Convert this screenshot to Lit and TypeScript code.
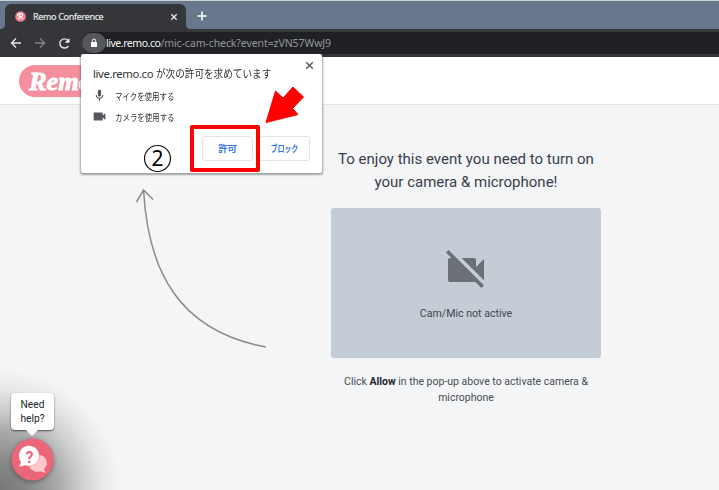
import { LitElement, html, css, svg } from "lit";
import { customElement } from "lit/decorators.js";

const camera = svg`<path d="M17 10.5V7c0-.55-.45-1-1-1H4c-.55 0-1 .45-1 1v10c0 .55.45 1 1 1h12c.55 0 1-.45 1-1v-3.500l4 4v-11z"/>`;

@customElement("browser-bar")
class BrowserBar extends LitElement {
  static styles = css`
    :host { display: block; height: 57px; background: #35363a; font-family: "Noto Sans", "Open Sans", sans-serif; }
    .strip { box-sizing: border-box; height: 29px; border-top: 1px solid #c9d0d6; background: #68778c; display: flex; padding: 3px 0 0 5px; }
    .tab { position: relative; box-sizing: border-box; width: 181px; height: 25px; background: #35363a; border-radius: 6px 6px 0 0; display: flex; align-items: center; padding: 0 8px 0 10px; color: #e6e8ea; }
    .tab::before, .tab::after { content: ""; position: absolute; bottom: 0; width: 5px; height: 5px; }
    .tab::before { left: -5px; background: radial-gradient(circle at 0 0, transparent 5px, #35363a 5.500px); }
    .tab::after { right: -5px; background: radial-gradient(circle at 100% 0, transparent 5px, #35363a 5.500px); }
    .title { font-size: 9px; line-height: 12px; margin: 1px 0 0 7px; flex: 1; white-space: nowrap; letter-spacing: -.33px; -webkit-text-stroke: .15px; }
    .plus { margin: 7px 0 0 11px; }
    svg { display: block; flex: none; }
    .tools { height: 28px; display: flex; align-items: center; padding-left: 10px; box-sizing: border-box; }
    .tools > svg { margin-right: 12px; }
    .omni { flex: 1; height: 22px; margin-left: -1px; border-radius: 11px 0 0 11px; background: #202124; display: flex; align-items: center; color: #94979b; font-size: 10.500px; white-space: nowrap; }
    .lock { width: 24px; height: 20px; border-radius: 10px; background: #55575b; display: grid; place-items: center; }
    .host { color: #f2f3f4; letter-spacing: -.46px; }
    .path { letter-spacing: -.08px; }
  `;
  render() {
    return html`
      <div class="strip">
        <div class="tab">
          <svg width="11" height="11" viewBox="0 0 11 11"><circle cx="5.500" cy="5.500" r="5.300" fill="#f27f8e"/><path d="M3.600 8.600 5 3.200M2.600 4.900C2.500 1.900 8 1.900 7.700 4.300 7.500 5.700 5.700 5.900 5 5.900 6.300 5.800 5.800 8.300 8 7.700" fill="none" stroke="#fff" stroke-width="1.100"/></svg>
          <span class="title">Remo Conference</span>
          <svg width="8" height="8" viewBox="0 0 8 8"><path d="M1.300 1.300 6.700 6.700M6.700 1.300 1.300 6.700" stroke="#e8eaed" stroke-width="1.300"/></svg>
        </div>
        <svg class="plus" width="10" height="10" viewBox="0 0 10 10"><path d="M5 .5v9M.5 5h9" stroke="#fff" stroke-width="1.500"/></svg>
      </div>
      <div class="tools">
        <svg width="12" height="12" viewBox="0 0 12 12"><path d="M11 6H2M6 1.500 1.500 6 6 10.500" fill="none" stroke="#e8eaed" stroke-width="1.300"/></svg>
        <svg width="12" height="12" viewBox="0 0 12 12"><path d="M1 6h9M6 1.500 10.500 6 6 10.500" fill="none" stroke="#818387" stroke-width="1.300"/></svg>
        <svg width="13" height="13" viewBox="0 0 13 13"><path d="M10.300 9A4.600 4.600 0 1 1 9.800 3.300" fill="none" stroke="#e8eaed" stroke-width="1.400"/><path d="M11.500 1v4.800H6.700z" fill="#e8eaed"/></svg>
        <div class="omni">
          <span class="lock"><svg width="8" height="10" viewBox="0 0 8 10"><rect x="1" y="4" width="6" height="5" rx=".6" fill="#fff"/><path d="M2.400 4V2.600a1.600 1.600 0 0 1 3.200 0V4" fill="none" stroke="#fff"/></svg></span>
          <span class="host">live.remo.co</span><span class="path">/mic-cam-check?event=zVN57WwJ9</span>
        </div>
      </div>`;
  }
}

@customElement("permission-popup")
class PermissionPopup extends LitElement {
  static styles = css`
    :host { display: block; box-sizing: border-box; width: 241px; height: 119px; background: #fff; border-radius: 2px; box-shadow: 0 1px 2px 1px rgba(60,64,67,.45); padding: 11px 12px; position: relative; font-family: "Noto Sans", "Noto Sans CJK JP", sans-serif; color: #303236; }
    .title { font-size: 11.300px; line-height: 18px; white-space: nowrap; letter-spacing: -.36px; }
    .narrow { display: inline-block; transform: scaleX(.85); transform-origin: 0 50%; letter-spacing: 0; }
    .row { display: flex; align-items: center; height: 21px; font-size: 9.300px; white-space: nowrap; }
    .row .narrow { transform: scaleX(.8); }
    .rows { margin-top: 2px; }
    .row svg { margin-right: 9px; fill: #55585c; }
    .close { position: absolute; right: 8px; top: 7px; }
    .actions { display: flex; justify-content: flex-end; gap: 6px; margin-top: 9px; }
    .btn { box-sizing: border-box; width: 51px; height: 25px; border: 1px solid #e2e4e8; border-radius: 3px; font: 500 9.300px/23px "Noto Sans CJK JP", sans-serif; color: #2f70e6; -webkit-text-stroke: .2px; text-align: center; white-space: nowrap; }
    .squeeze { display: inline-block; transform: scaleX(.74); margin: 0 -8px; }
  `;
  render() {
    return html`
      <svg class="close" width="9" height="9" viewBox="0 0 9 9"><path d="M1.200 1.200l6.600 6.600m0-6.600-6.600 6.600" stroke="#55585c" stroke-width="1.400"/></svg>
      <div class="title">live.remo.co <span class="narrow">が次の許可を求めています</span></div>
      <div class="rows">
        <div class="row"><svg width="13" height="13" viewBox="0 0 24 24"><path d="M12 14a3 3 0 0 0 3-3V4a3 3 0 0 0-6 0v7a3 3 0 0 0 3 3zm7-3h-2a5 5 0 0 1-10 0H5a7 7 0 0 0 6 6.900V22h2v-4.100A7 7 0 0 0 19 11z"/></svg><span class="narrow">マイクを使用する</span></div>
        <div class="row"><svg width="13" height="13" viewBox="2 2 20 20">${camera}</svg><span class="narrow">カメラを使用する</span></div>
      </div>
      <div class="actions"><div class="btn">許可</div><div class="btn"><span class="squeeze">ブロック</span></div></div>`;
  }
}

@customElement("app-root")
class AppRoot extends LitElement {
  static styles = css`
    :host { display: block; position: relative; width: 719px; height: 490px; overflow: hidden; background: #f3f5f7; font-family: Roboto, sans-serif; color: #3c4048; }
    header { height: 48px; box-sizing: border-box; background: #fff; border-bottom: 1px solid #e3e4e6; padding: 8px 0 0 19px; }
    .logo { width: 94px; height: 32px; box-sizing: border-box; border-radius: 16px; background: #f58f9d; display: block; }
    .logo text { font: italic 700 26px "Liberation Serif", serif; fill: #fff; stroke: #fff; stroke-width: .9px; }
    main { width: 270px; margin: 43px 0 0 331px; text-align: center; }
    h1 { margin: 0 -10px; font-size: 15px; line-height: 23px; font-weight: 400; white-space: nowrap; color: #3b3e4b; }
    .cam { height: 150px; margin-top: 14px; border-radius: 3px; background: #c4ccd5; display: flex; flex-direction: column; align-items: center; padding-top: 38px; box-sizing: border-box; font-size: 10.600px; line-height: 16px; color: #43474e; }
    .cam svg { display: block; margin-bottom: 12px; flex: none; }
    .hint { margin: 16px 0 0; font-size: 10.500px; line-height: 15.500px; white-space: nowrap; color: #484c54; }
    b { font-weight: 700; color: #24262c; }
    permission-popup { position: absolute; left: 81px; top: 54px; }
    .marks { position: absolute; left: 0; top: 0; }
    .marks text { font: 21px "Noto Sans", sans-serif; fill: #000; }
    .help { position: absolute; left: 0; bottom: 0; width: 130px; height: 130px; background: radial-gradient(circle at 0 130px, #777 0, #858585 24px, #a9a9aa 58px, #cfd0d2 82px, #e7e8ea 102px, #f3f5f7 120px); }
    .bubble { position: absolute; left: 11px; top: 33px; width: 43px; height: 37px; box-sizing: border-box; padding-top: 5px; background: #fff; border-radius: 4px; box-shadow: 0 1px 2px rgba(0,0,0,.6); font-size: 10.200px; line-height: 14px; text-align: center; color: #222; }
    .bubble::after { content: ""; position: absolute; left: 14px; top: 36px; width: 14px; height: 7px; background: #fff; clip-path: polygon(0 0, 100% 0, 50% 100%); }
    .chat { position: absolute; left: 11px; top: 78px; filter: drop-shadow(0 1px 2px rgba(0,0,0,.4)); }
    .chat text { font: 700 16px Roboto, sans-serif; fill: #eb6679; }
  `;
  render() {
    return html`
      <browser-bar></browser-bar>
      <header><svg class="logo" viewBox="0 0 94 32"><text x="10" y="25" textLength="63" lengthAdjust="spacingAndGlyphs">Remo</text></svg></header>
      <main>
        <h1>To enjoy this event you need to turn on<br>your camera &amp; microphone!</h1>
        <div class="cam">
          <svg width="48" height="48" viewBox="0 0 24 24" fill="#6a7075"><path d="M21 6.500l-4 4V7c0-.55-.45-1-1-1H9.820L21 17.180V6.500zM3.270 2 2 3.270 4.730 6H4c-.55 0-1 .45-1 1v10c0 .55.45 1 1 1h12c.21 0 .39-.08.540-.18L19.730 21 21 19.730 3.270 2z"/></svg>
          Cam/Mic not active
        </div>
        <p class="hint">Click <b>Allow</b> in the pop-up above to activate camera &amp;<br>microphone</p>
      </main>
      <div class="help">
        <div class="bubble">Need<br>help?</div>
        <svg class="chat" width="43" height="43" viewBox="0 0 43 43">
          <circle cx="21.500" cy="21.500" r="21" fill="#eb6679"/>
          <path d="M29 17a8 8 0 0 1 4 14l1.500 4-5-1.700A9 9 0 0 1 18 28z" fill="#ffc8ca"/>
          <path d="M9.800 24A10.300 10.300 0 1 1 14.500 27.500L8 29z" fill="#fff" stroke="#eb6679" stroke-width=".5"/>
          <text x="14.600" y="24.500">?</text>
        </svg>
      </div>
      <permission-popup></permission-popup>
      <svg class="marks" width="719" height="490" viewBox="0 0 719 490">
        <g fill="none" stroke="#8b8b8b" stroke-width="1.500"><path d="M143.500 190C148 270 178 331 266 347"/><path d="M136.500 202 143.500 190 153 199.500"/></g>
        <circle cx="157.500" cy="158.500" r="13" fill="none" stroke="#111" stroke-width="1.200"/>
        <text x="157.500" y="166" text-anchor="middle">2</text>
        <rect x="192" y="127" width="66" height="43" fill="none" stroke="#f00" stroke-width="4" stroke-linejoin="round"/>
        <path d="M266 122.500 275.500 91 283 98 293 87 303.500 97 292.500 108.500 298 114.500z" fill="#f00" stroke="#f00" stroke-linejoin="round"/>
      </svg>`;
  }
}
